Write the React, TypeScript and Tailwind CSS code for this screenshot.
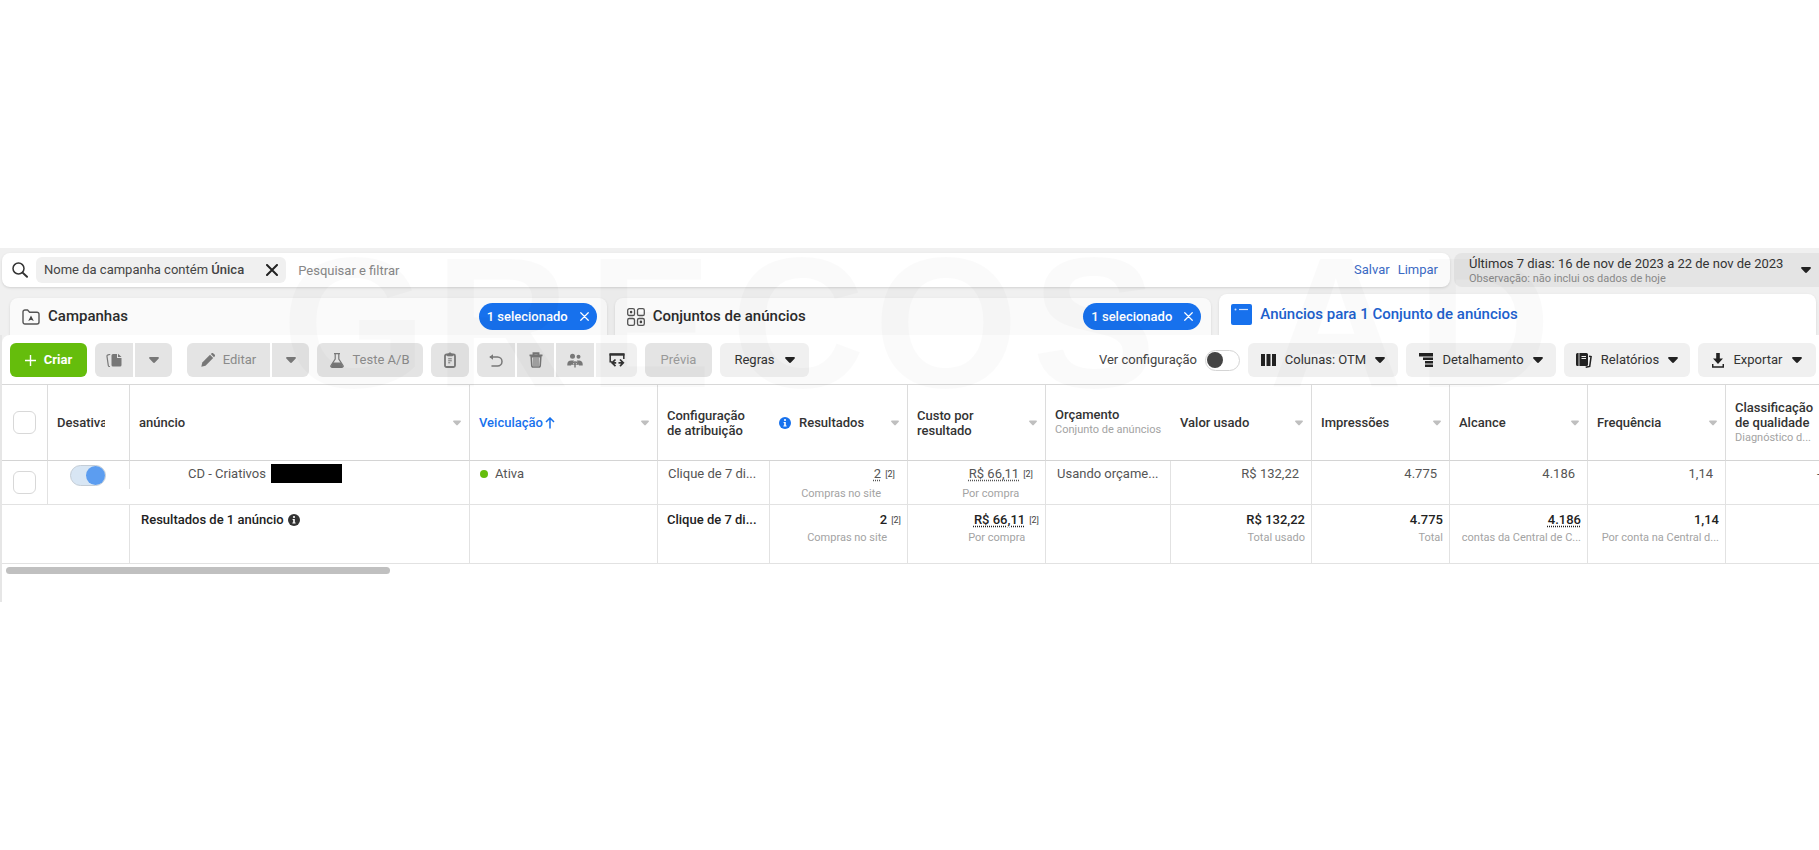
import type { ReactNode } from "react";
import clsx from "clsx";

const watermark = ["GRECOS", "AD"];

type IconProps = { className?: string };

function Caret({ className = "text-[#222]" }: IconProps) {
  return (
    <svg width="10" height="6" viewBox="0 0 10 6" fill="currentColor" className={clsx("shrink-0", className)}>
      <path d="M1 0h8c.8 0 1.2.8.7 1.4L5.9 5.5a1.2 1.2 0 0 1-1.8 0L.3 1.4C-.2.8.2 0 1 0z" />
    </svg>
  );
}

function CloseIcon({ size = 12, width = 2 }: { size?: number; width?: number }) {
  return (
    <svg width={size} height={size} viewBox="0 0 12 12" stroke="currentColor" strokeWidth={width} strokeLinecap="round">
      <path d="M1 1l10 10M11 1L1 11" />
    </svg>
  );
}

function InfoIcon({ className }: IconProps) {
  return (
    <svg width="12" height="12" viewBox="0 0 12 12" className={clsx("shrink-0", className)}>
      <circle cx="6" cy="6" r="6" fill="currentColor" />
      <circle cx="6" cy="3" r="1.1" fill="#fff" />
      <path d="M4.6 5h2.2v3.4h.8v1H4.4v-1h.8V6h-.6z" fill="#fff" />
    </svg>
  );
}

function FolderIcon() {
  return (
    <svg width="18" height="16" viewBox="0 0 18 16" fill="none" stroke="#555" strokeWidth="1.4" strokeLinejoin="round">
      <path d="M1 3a2 2 0 0 1 2-2h2.6l2 2.2H15a2 2 0 0 1 2 2V13a2 2 0 0 1-2 2H3a2 2 0 0 1-2-2z" />
      <path d="M9 6.5L6.2 12 9 10.7 11.8 12z" fill="#444" stroke="none" />
    </svg>
  );
}

function GridIcon() {
  return (
    <svg width="18" height="18" viewBox="0 0 18 18" fill="none" stroke="#555" strokeWidth="1.3">
      <rect x="0.7" y="0.7" width="6.8" height="6.8" rx="1.6" />
      <rect x="10.5" y="0.7" width="6.8" height="6.8" rx="1.6" />
      <rect x="0.7" y="10.5" width="6.8" height="6.8" rx="1.6" />
      <rect x="10.5" y="10.5" width="6.8" height="6.8" rx="1.6" />
      <circle cx="4.1" cy="4.1" r="1.3" fill="#444" stroke="none" />
      <circle cx="13.9" cy="13.9" r="1.3" fill="#444" stroke="none" />
    </svg>
  );
}

function AdIcon() {
  return (
    <svg width="21" height="21" viewBox="0 0 21 21">
      <rect width="21" height="21" rx="2" fill="#1771ed" />
      <circle cx="4.5" cy="5.5" r="1" fill="#cfe2ff" />
      <path d="M8 5.5h9" stroke="#cfe2ff" strokeWidth="1.2" />
    </svg>
  );
}

function SearchIcon() {
  return (
    <svg width="16" height="16" viewBox="0 0 16 16" fill="none" stroke="#333" strokeWidth="1.5" strokeLinecap="round">
      <circle cx="6.5" cy="6.5" r="5.500" />
      <path d="M10.6 10.6l4.4 4.2" strokeWidth="2" />
    </svg>
  );
}

function PlusIcon() {
  return (
    <svg width="11" height="11" viewBox="0 0 11 11" stroke="#fff" strokeWidth="1.4">
      <path d="M5.5 0v11M0 5.5h11" />
    </svg>
  );
}

function CopyIcon() {
  return (
    <svg width="16" height="15" viewBox="0 0 16 15" fill="currentColor">
      <path d="M7 1h4v4h4.5v7a1.5 1.5 0 0 1-1.5 1.5H7A1.5 1.5 0 0 1 5.5 12V2.5A1.5 1.5 0 0 1 7 1z" />
      <path d="M12 .8L15.5 4H12z" />
      <path d="M3.8 1.5L2 1.9a1.2 1.2 0 0 0-1 1.4L2.3 12.5a1.2 1.2 0 0 0 1.2 1" fill="none" stroke="currentColor" strokeWidth="1.2" strokeLinecap="round" />
    </svg>
  );
}

function PencilIcon() {
  return (
    <svg width="14" height="14" viewBox="0 0 14 14" fill="currentColor">
      <path d="M.3 13.7l1-4.2L9 1.8 12.2 5 4.5 12.7z" />
      <path d="M9.8 1l.6-.6a1.4 1.4 0 0 1 2 0l1.2 1.2a1.4 1.4 0 0 1 0 2l-.6.6z" />
    </svg>
  );
}

function FlaskIcon() {
  return (
    <svg width="14" height="15" viewBox="0 0 14 15" fill="none" stroke="currentColor">
      <path d="M4 .7h6M5.2 1v5L1 12.5c-.5 1 0 1.8 1 1.8h10c1 0 1.5-.8 1-1.8L8.8 6V1" strokeWidth="1.2" />
      <path d="M3.2 9.500h7.600l2 3.200c.4.800.1 1.500-.8 1.500H2c-.9 0-1.200-.7-.8-1.500z" fill="currentColor" stroke="none" />
    </svg>
  );
}

function ClipboardIcon() {
  return (
    <svg width="12" height="16" viewBox="0 0 12 16" fill="none" stroke="currentColor">
      <rect x="1" y="2.500" width="10" height="12.500" rx="1.500" strokeWidth="1.800" />
      <path d="M3.500 3.800V2.200h1.200a1.300 1.300 0 0 1 2.600 0h1.200v1.600z" fill="currentColor" />
      <path d="M4.200 6.800h3.600M4.200 8.800h3.600M4.200 10.800h2" />
    </svg>
  );
}

function UndoIcon() {
  return (
    <svg width="14" height="13" viewBox="0 0 14 13" fill="none" stroke="currentColor" strokeWidth="1.5" strokeLinejoin="round">
      <path d="M1.500 3H8.500a4.400 4.400 0 0 1 0 9H3" strokeLinecap="round" />
      <path d="M4 .2v5.600L.3 3z" fill="currentColor" stroke="none" />
    </svg>
  );
}

function TrashIcon() {
  return (
    <svg width="14" height="16" viewBox="0 0 14 16" fill="none" stroke="currentColor">
      <path d="M.5 3.400h13M4.500 3V1.200h5V3" strokeWidth="1.900" />
      <path d="M2.200 4.800l.6 9a1.200 1.200 0 0 0 1.200 1.200h6a1.200 1.200 0 0 0 1.200-1.200l.6-9z" strokeWidth="1.600" />
      <path d="M5 5.500v8.500M7 5.500v8.500M9 5.500v8.500" strokeWidth="1.200" />
    </svg>
  );
}

function PeopleIcon() {
  return (
    <svg width="16" height="15" viewBox="0 0 16 15" fill="currentColor">
      <circle cx="5.500" cy="3.200" r="2.500" />
      <circle cx="11.500" cy="3.800" r="2" />
      <path d="M.3 12.500V11.500A4 4 0 0 1 4.300 7.500h2.700L4 12.500z" />
      <path d="M9.800 7.500H12a3.600 3.600 0 0 1 3.700 3.700v1.300H12z" />
      <path d="M5 12a3 3 0 0 1 6 0" fill="none" stroke="currentColor" strokeWidth="1.300" />
      <path d="M5.800 11.800L8 9.500l2.200 2.300H8.700v2.700H7.300v-2.700z" />
    </svg>
  );
}

function SwapIcon() {
  return (
    <svg width="16" height="15" viewBox="0 0 16 15" fill="none" stroke="currentColor">
      <path d="M2.800 8.800H1.200V1.500h13.600V6" strokeWidth="1.500" />
      <path d="M.5 1.400h15" strokeWidth="2.400" />
      <path d="M6.500 6.500L3 9.800l3.500 3.300M11 6.500l3.300 3.300-3.300 3.300M3.500 9.800h3.700M9.500 9.800h4" strokeWidth="1.700" />
    </svg>
  );
}

function ColumnsIcon() {
  return (
    <svg width="15" height="12" viewBox="0 0 15 12" fill="#222">
      <path d="M0 0h4v12H0zM5.500 0h4v12h-4zM11 0h4v12h-4z" />
    </svg>
  );
}

function BreakdownIcon() {
  return (
    <svg width="14" height="14" viewBox="0 0 14 14" fill="#222">
      <path d="M0 0h14v3.500H0zM4 4.500h10v2.500H4zM6 8h8v2.500H6zM6 11.500h8V14H6z" />
    </svg>
  );
}

function ReportsIcon() {
  return (
    <svg width="16" height="15" viewBox="0 0 16 15">
      <path d="M1.500 0H2.600v13H1.500A1.500 1.500 0 0 1 0 11.500v-10A1.500 1.500 0 0 1 1.500 0zM3.400 0h7.100A1.500 1.500 0 0 1 12 1.500v10a1.500 1.500 0 0 1-1.500 1.500H3.400z" fill="#222" />
      <path d="M5.500 3.500h4.500M5.500 5.500h4.500" stroke="#eee" />
      <path d="M13 3.200l2.100.4-1.400 9.800-4 .9" fill="none" stroke="#222" strokeWidth="1.500" />
    </svg>
  );
}

function DownloadIcon() {
  return (
    <svg width="12" height="15" viewBox="0 0 12 15" fill="#222">
      <path d="M4.200 0h3.600v5.500H11L6 11 1 5.500h3.200z" />
      <path d="M.7 11v3h10.600v-3" fill="none" stroke="#222" strokeWidth="1.500" />
    </svg>
  );
}

type ToolButtonProps = {
  children: ReactNode;
  label?: string;
  className?: string;
  muted?: boolean;
};

function ToolButton({ children, label, className, muted }: ToolButtonProps) {
  return (
    <button
      type="button"
      aria-label={label}
      className={clsx(
        "flex h-[34px] shrink-0 items-center justify-center whitespace-nowrap",
        muted ? "bg-[#e4e4e4] text-[#777]" : "bg-[#f0f0f0] text-[#333]",
        className,
      )}
    >
      {children}
    </button>
  );
}

function SelectedPill() {
  return (
    <button
      type="button"
      className="ml-auto flex h-[27px] items-center gap-3 rounded-full bg-[#1771ed] px-2 text-[13px] font-medium text-white"
    >
      1 selecionado
      <CloseIcon size={9} width={1.6} />
    </button>
  );
}

function Checkbox({ label }: { label: string }) {
  return (
    <input
      type="checkbox"
      aria-label={label}
      className="block size-[23px] appearance-none rounded-md border border-[#d8d8d8] bg-white"
    />
  );
}

type HeadProps = {
  children: ReactNode;
  sub?: string;
  sortable?: boolean;
  border?: boolean;
};

function Head({ children, sub, sortable, border = true }: HeadProps) {
  return (
    <th
      scope="col"
      className={clsx(
        "h-[76px] border-b border-[#d4d4d4] pr-2 pl-[9px] text-left align-middle leading-[15px] font-medium text-[#333]",
        border && "border-r border-r-[#dcdcdc]",
      )}
    >
      <div className="flex items-center justify-between">
        <div className="whitespace-nowrap">
          {children}
          {sub && <div className="text-[11px] leading-4 font-normal text-[#a3a3a3]">{sub}</div>}
        </div>
        {sortable && <Caret className="w-2 text-[#bfbfbf]" />}
      </div>
    </th>
  );
}

type MetricProps = {
  value?: string;
  sub?: string;
  note?: boolean;
  dotted?: boolean;
  total?: boolean;
};

function Metric({ value, sub, note, dotted, total }: MetricProps) {
  return (
    <td
      className={clsx(
        "overflow-hidden border-r border-b border-[#e2e2e2] text-right align-top whitespace-nowrap",
        total
          ? "pt-[6px] pr-[6px] leading-[18px] font-medium text-[#222]"
          : "pt-[3px] pr-3 leading-5 text-[#555]",
      )}
    >
      <div className="flex justify-end gap-1">
        <div>
          {value && (
            <div className={clsx(dotted && "underline decoration-dotted underline-offset-2")}>{value}</div>
          )}
          {sub && <div className="text-[11px] leading-[inherit] font-normal text-[#a3a3a3]">{sub}</div>}
        </div>
        {note && <span className="text-[9px] leading-[inherit] font-normal text-[#444]">[2]</span>}
      </div>
    </td>
  );
}

function FilterBar() {
  return (
    <div className="flex gap-1 pl-0.5">
      <div className="flex h-[34px] min-w-0 flex-1 items-center rounded-lg bg-white pr-3 pl-2.5 text-[13px] shadow-sm">
        <SearchIcon />
        <div className="ml-2 flex h-[26px] items-center gap-[22px] rounded-md bg-[#f0f0f0] px-2 text-[#444]">
          <span>
            Nome da campanha contém <b className="font-medium">Única</b>
          </span>
          <button type="button" aria-label="Remover filtro" className="text-[#222]">
            <CloseIcon />
          </button>
        </div>
        <input
          type="text"
          aria-label="Pesquisar e filtrar"
          placeholder="Pesquisar e filtrar"
          className="ml-3 h-6 min-w-0 flex-1 outline-none placeholder:text-[#888]"
        />
        <div className="flex gap-2 text-[#3b6ac4]">
          <a href="#salvar">Salvar</a>
          <a href="#limpar">Limpar</a>
        </div>
      </div>
      <button
        type="button"
        className="flex h-[34px] w-[365px] items-center justify-between rounded-l-lg bg-[#e4e4e4] pr-2 pl-[15px] text-left"
      >
        <span className="whitespace-nowrap">
          <span className="block text-[13px] leading-4 text-[#333]">
            Últimos 7 dias: 16 de nov de 2023 a 22 de nov de 2023
          </span>
          <span className="block text-[11px] leading-[13px] text-[#888]">Observação: não inclui os dados de hoje</span>
        </span>
        <Caret />
      </button>
    </div>
  );
}

function Tabs() {
  return (
    <nav className="grid h-12 grid-cols-3 items-end gap-2 pr-[3px] pl-2.5 text-[15px] font-medium text-[#2b2b2b]">
      <div className="flex h-[37px] items-center rounded-t-lg bg-[#fafafa] pr-2.5 pl-3 shadow-sm">
        <a href="#campanhas" className="flex items-center gap-2">
          <FolderIcon />
          Campanhas
        </a>
        <SelectedPill />
      </div>
      <div className="flex h-[37px] items-center rounded-t-lg bg-[#fafafa] pr-2.5 pl-3 shadow-sm">
        <a href="#conjuntos" className="flex items-center gap-2">
          <GridIcon />
          Conjuntos de anúncios
        </a>
        <SelectedPill />
      </div>
      <div className="flex h-[41px] items-center rounded-t-lg bg-white pl-3 shadow-sm">
        <a href="#anuncios" className="flex items-center gap-2 text-[#2060cc]">
          <AdIcon />
          Anúncios para 1 Conjunto de anúncios
        </a>
      </div>
    </nav>
  );
}

function Toolbar() {
  return (
    <div className="flex h-[50px] items-start justify-between rounded-tl-lg border-b border-[#d8d8d8] bg-white pt-2 pr-[3px] pl-2 text-[13px]">
      <div className="flex gap-2">
        <button
          type="button"
          className="flex h-[34px] w-[77px] items-center justify-center gap-2 rounded-md bg-[#65bd0c] font-bold text-white"
        >
          <PlusIcon />
          Criar
        </button>
        <div className="mr-[7px] flex gap-0.5">
          <ToolButton muted label="Duplicar" className="w-[38px] rounded-l-md">
            <CopyIcon />
          </ToolButton>
          <ToolButton muted label="Opções de duplicação" className="w-[37px] rounded-r-md">
            <Caret className="text-[#777]" />
          </ToolButton>
        </div>
        <div className="flex gap-0.5">
          <ToolButton muted className="w-[83px] gap-2 rounded-l-md">
            <PencilIcon />
            <span className="text-[#8a8a8a]">Editar</span>
          </ToolButton>
          <ToolButton muted label="Opções de edição" className="w-[37px] rounded-r-md">
            <Caret className="text-[#777]" />
          </ToolButton>
        </div>
        <ToolButton muted className="w-[106px] gap-2 rounded-md">
          <FlaskIcon />
          <span className="text-[#8a8a8a]">Teste A/B</span>
        </ToolButton>
        <ToolButton muted label="Copiar" className="w-[38px] rounded-md">
          <ClipboardIcon />
        </ToolButton>
        <div className="flex gap-0.5">
          <ToolButton muted label="Desfazer" className="w-[38px] rounded-l-md">
            <UndoIcon />
          </ToolButton>
          <ToolButton muted label="Excluir" className="w-[37px]">
            <TrashIcon />
          </ToolButton>
          <ToolButton muted label="Públicos" className="w-[38px]">
            <PeopleIcon />
          </ToolButton>
          <ToolButton label="Trocar" className="w-[41px] rounded-r-md">
            <SwapIcon />
          </ToolButton>
        </div>
        <ToolButton muted className="w-[67px] rounded-md">
          <span className="text-[#999]">Prévia</span>
        </ToolButton>
        <ToolButton className="w-[89px] gap-2.5 rounded-md">
          Regras
          <Caret />
        </ToolButton>
      </div>

      <div className="flex items-center gap-2">
        <label className="flex items-center gap-2 text-[#444]">
          Ver configuração
          <input
            type="checkbox"
            className="h-[21px] w-[35px] appearance-none rounded-full border border-[#d4d4d4] bg-white before:mt-px before:ml-px before:block before:size-4 before:rounded-full before:bg-[#444]"
          />
        </label>
        <ToolButton className="w-[150px] gap-[9px] rounded-md">
          <ColumnsIcon />
          Colunas: OTM
          <Caret />
        </ToolButton>
        <ToolButton className="w-[150px] gap-[9px] rounded-md">
          <BreakdownIcon />
          Detalhamento
          <Caret />
        </ToolButton>
        <ToolButton className="w-[126px] gap-[9px] rounded-md">
          <ReportsIcon />
          Relatórios
          <Caret />
        </ToolButton>
        <ToolButton className="w-[118px] gap-[9px] rounded-md">
          <DownloadIcon />
          Exportar
          <Caret />
        </ToolButton>
      </div>
    </div>
  );
}

function AdsTable() {
  return (
    <div className="overflow-hidden">
      <table className="w-[1862px] table-fixed border-separate border-spacing-0 text-[13px]">
        <colgroup>
          <col className="w-[46px]" />
          <col className="w-[82px]" />
          <col className="w-[340px]" />
          <col className="w-[188px]" />
          <col className="w-[112px]" />
          <col className="w-[138px]" />
          <col className="w-[138px]" />
          <col className="w-[125px]" />
          <col className="w-[141px]" />
          <col className="w-[138px]" />
          <col className="w-[138px]" />
          <col className="w-[138px]" />
          <col className="w-[138px]" />
        </colgroup>
        <thead>
          <tr>
            <th scope="col" className="border-r border-b border-[#d4d4d4] border-r-[#dcdcdc] pl-[11px]">
              <Checkbox label="Selecionar todos" />
            </th>
            <Head>
              <div className="w-12 overflow-hidden">Desativado</div>
            </Head>
            <Head sortable>anúncio</Head>
            <Head sortable>
              <span className="flex items-center gap-0.5 text-[#1771ed]">
                Veiculação
                <svg width="10" height="12" viewBox="0 0 10 12" fill="none" stroke="currentColor" strokeWidth="1.5">
                  <path d="M5 11.5V1.2M1 5l4-4 4 4" />
                </svg>
              </span>
            </Head>
            <Head border={false}>
              Configuração
              <br />
              de atribuição
            </Head>
            <Head sortable>
              <span className="flex items-center gap-2">
                <InfoIcon className="text-[#1771ed]" />
                Resultados
              </span>
            </Head>
            <Head sortable>
              Custo por
              <br />
              resultado
            </Head>
            <Head border={false} sub="Conjunto de anúncios">
              Orçamento
            </Head>
            <Head sortable>Valor usado</Head>
            <Head sortable>Impressões</Head>
            <Head sortable>Alcance</Head>
            <Head sortable>Frequência</Head>
            <Head sub="Diagnóstico d...">
              Classificação
              <br />
              de qualidade
            </Head>
          </tr>
        </thead>
        <tbody>
          <tr className="h-[44px] text-[#555]">
            <td className="border-r border-b border-[#e2e2e2] pl-[11px]">
              <Checkbox label="Selecionar anúncio" />
            </td>
            <td className="border-b border-[#e2e2e2] pt-1 pl-[22px] align-top">
              <input
                type="checkbox"
                defaultChecked
                aria-label="Ativar anúncio"
                className="block h-[21px] w-9 appearance-none rounded-full border border-[#c4cdd6] bg-[#d8e6f4] before:ml-auto before:block before:size-[19px] before:rounded-full before:bg-[#5c9df0]"
              />
            </td>
            <td className="border-r border-b border-[#e2e2e2] align-top">
              <div className="-ml-px flex h-7 items-start border-l border-[#e2e2e2] pt-[3px] pl-[58px] leading-[19px]">
                CD - Criativos
                <span className="ml-[5px] block h-[19px] w-[71px] bg-black" />
              </div>
            </td>
            <td className="border-r border-b border-[#e2e2e2] pt-[3px] pl-2.5 align-top leading-5">
              <span className="flex items-center gap-[7px]">
                <span className="size-2 rounded-full bg-[#65bd0c]" />
                Ativa
              </span>
            </td>
            <td className="border-r border-b border-[#e2e2e2] pt-[3px] pl-2.5 align-top leading-5">
              Clique de 7 di...
            </td>
            <Metric value="2" sub="Compras no site" note dotted />
            <Metric value="R$ 66,11" sub="Por compra" note dotted />
            <td className="border-r border-b border-[#e2e2e2] pt-[3px] pl-[11px] align-top leading-5">
              Usando orçame...
            </td>
            <Metric value="R$ 132,22" />
            <Metric value="4.775" />
            <Metric value="4.186" />
            <Metric value="1,14" />
            <td className="border-b border-[#e2e2e2] pt-[3px] pl-[91px] align-top leading-5">-</td>
          </tr>
          <tr className="h-[59px] font-medium text-[#222]">
            <td colSpan={2} className="border-r border-b border-[#e2e2e2]" />
            <td className="border-r border-b border-[#e2e2e2] pt-[6px] pl-[11px] align-top leading-[18px]">
              <span className="flex items-center gap-1">
                Resultados de 1 anúncio
                <InfoIcon className="text-[#333]" />
              </span>
            </td>
            <td className="border-r border-b border-[#e2e2e2]" />
            <td className="border-r border-b border-[#e2e2e2] pt-[6px] pl-[9px] align-top leading-[18px]">
              Clique de 7 di...
            </td>
            <Metric total value="2" sub="Compras no site" note />
            <Metric total value="R$ 66,11" sub="Por compra" note dotted />
            <td className="border-r border-b border-[#e2e2e2]" />
            <Metric total value="R$ 132,22" sub="Total usado" />
            <Metric total value="4.775" sub="Total" />
            <Metric total value="4.186" sub="contas da Central de C..." dotted />
            <Metric total value="1,14" sub="Por conta na Central d..." />
            <td className="border-b border-[#e2e2e2]" />
          </tr>
        </tbody>
      </table>
    </div>
  );
}

function App() {
  return (
    <main className="min-h-screen overflow-hidden bg-white pt-[248px] font-['Roboto',sans-serif]">
      <div className="relative bg-[#f0f0f0] pt-[5px]">
        <FilterBar />
        <Tabs />
        <div className="relative border-l-2 border-[#e6e6e6]">
          <Toolbar />
          <div className="bg-white pb-7">
            <AdsTable />
            <div className="mt-[3px] ml-1 h-[7px] w-96 rounded-full bg-[#c0c0c0]" />
          </div>
        </div>
        <div
          aria-hidden="true"
          className="pointer-events-none absolute -top-2 left-[280px] flex gap-[94px] font-['Liberation_Sans',sans-serif] text-[186px] leading-[166px] font-bold text-black/2 select-none"
        >
          {watermark.map((word) => (
            <div key={word} className="flex">
              {word.split("").map((letter, i) => (
                <span key={i} className="w-[148px] text-center">
                  {letter}
                </span>
              ))}
            </div>
          ))}
        </div>
      </div>
    </main>
  );
}

export default App;
